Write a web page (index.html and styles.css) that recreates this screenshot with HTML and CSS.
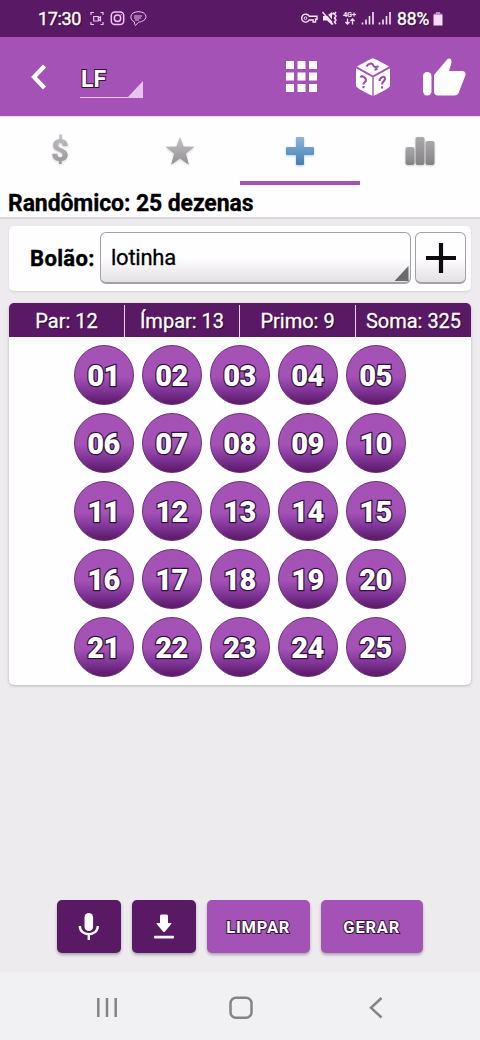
FILE: index.html
```html
<!DOCTYPE html>
<html lang="pt-BR">
<head>
<meta charset="utf-8">
<title>Randômico</title>
<link rel="stylesheet" href="styles.css">
</head>
<body>
<div class="statusbar">
  <span class="clock">17:30</span>
  <svg class="status-left" width="60" height="20" viewBox="0 0 60 20" fill="none" stroke="#ecc4f2" stroke-width="1.2">
    <path d="M4 3.500H1V6M10.500 3.500H13V6M1 13v2.500h3M13 13v2.500h-2.500M3.700 7.500h4.600v4.500H3.700zM8.500 9l2-1.200v4L8.500 10.600"/>
    <g stroke-width="1.500"><rect x="21.300" y="3" width="12.400" height="12.400" rx="3.500"/><circle cx="27.500" cy="9.200" r="3.200"/><path d="M30.800 5.700h.8"/></g>
    <path stroke-width="1" d="M44.500 13c-5.500-2.500-5-10 3.500-10.300h1c8.500.3 9 8 2.500 9.800-1.300.5-3 .8-3.500 1.200l-2.500 2.800c-.8-.8-1.200-2-1-3.500zM44 7h8M44 9h7M45 11h4"/>
  </svg>
  <svg class="status-right" width="92" height="20" viewBox="0 0 92 20" fill="none" stroke="#f7e4fa">
    <path stroke-width="1.400" d="M9.200 7.300H17v3h-1.400v2.700h-2.500V11H9.200A4 4 0 1 1 9.200 7.300z"/><circle cx="5.500" cy="9.200" r="1.300"/>
    <path fill="#f7e4fa" stroke="none" d="M23 7h3.500L32 3v13l-5-4.500h-4z"/>
    <path stroke="#591965" stroke-width="1.200" d="M24 2l12 14"/><path stroke-width="1.300" d="M22.500 3l10.500 12.500"/>
    <path stroke-width="1.500" d="M33.700 3.500l-1.200 2M36 3l-1.500 2 1.500 2-1.500 2 1.500 2-1.500 2 1.500 2"/>
    <text class="network" x="43" y="8">4G+</text>
    <path stroke-width="1.300" d="M47.500 9.500v5.500M45.500 13l2 2 2-2M52.500 15.500V10M50.500 12l2-2 2 2"/>
    <path stroke-width="1.600" d="M62.500 13.500v2M66 10.500v5M69.500 7v8.500M73 3v12.500M79.500 13.500v2M83 10.500v5M86.500 7v8.500M90 3v12.500"/>
  </svg>
  <span class="percent">88%</span>
  <svg class="battery" width="10" height="16" viewBox="0 0 10 16"><path fill="#bd91c5" d="M3 1h4v1.500h1.500Q9.500 2.500 9.500 4H.5Q.5 2.500 1.500 2.500H3z"/><path fill="#f5dcf8" d="M.5 4h9v10.500h-9z"/></svg>
</div>
<header class="appbar">
  <svg class="back" width="18" height="28" viewBox="0 0 18 28"><path d="M15.500 3L5 14l10.500 11" fill="none" stroke="#fff" stroke-width="4.200"/></svg>
  <div class="lottery"><span class="outlined">LF</span><svg width="15" height="16" viewBox="0 0 15 16"><path d="M0 16L15 0v16z" fill="#e7c4ed"/></svg></div>
  <svg class="apps" width="32" height="32" viewBox="0 0 32 32" fill="#fff"><path d="M0 0h8v8H0zM11.500 0h8v8h-8zM23 0h8v8h-8zM0 11.500h8v8H0zM11.500 11.500h8v8h-8zM23 11.500h8v8h-8zM0 23h8v8H0zM11.500 23h8v8h-8zM23 23h8v8h-8z"/></svg>
  <svg class="dice" width="36" height="40" viewBox="0 0 36 40">
    <path fill="#fff" d="M18 1.200Q19 1 34 9.500L18 18.500 2 9.500Q17 1 18 1.200zM1 11.200l16.300 9V38.800Q1 31 1 29zM35 11.200l-16.300 9V38.800Q35 31 35 29z"/>
    <g fill="none" stroke="#9a48aa" stroke-width="2"><path d="M11.500 9.500C13 6.500 17 5.500 18 8c.8 2.200 3 2.800 5.500 1.200M19.500 12.800l3-1"/><path d="M5.500 20.500c.5-3 5.500-.5 5.500 2.800 0 2.200-2.500 1.500-2.500 4.200M8.500 29v2.200"/><path d="M24.500 24c0-3.500 5.500-6 5.500-2.500 0 3-3 3-3 6M27 29.200v2.200"/></g>
  </svg>
  <svg class="like" width="44" height="40" viewBox="0 0 44 40" fill="#fff"><rect x="0" y="15" width="8.500" height="23.500" rx="4.200"/><path d="M11 18L24.500 2Q28.500 0 28.500 5.500L26 14h13Q43 14 42.500 18L36 35Q35 38.500 31 38.500H15Q11 38.500 11 34.500z"/></svg>
</header>
<nav class="tabs">
  <svg width="0" height="0" class="defs"><defs>
    <linearGradient id="gray" x2="0" y2="1"><stop stop-color="#c4c2c4"/><stop offset="1" stop-color="#929092"/></linearGradient>
    <linearGradient id="dark" x2="0" y2="1"><stop stop-color="#aaa8aa"/><stop offset="1" stop-color="#858285"/></linearGradient>
    <linearGradient id="blue" x2="0" y2="1"><stop stop-color="#8bb5dc"/><stop offset="1" stop-color="#447eaf"/></linearGradient>
  </defs></svg>
  <div class="tab"><svg width="36" height="40" viewBox="0 0 36 40"><text class="dollar" x="18" y="28" text-anchor="middle" fill="url(#gray)">$</text></svg></div>
  <div class="tab"><svg width="36" height="36" viewBox="0 0 36 36"><path fill="url(#gray)" d="M18 4l3.600 9.500 10.900.2-8.600 6.800 3 11.300-8.900-6.300-8.900 6.300 3-11.300L3.500 13.700l10.900-.2z"/></svg></div>
  <div class="tab active"><svg width="36" height="36" viewBox="0 0 36 36"><path fill="url(#blue)" d="M15 4h6q1 0 1 1v9h9q1 0 1 1v6q0 1-1 1h-9v9q0 1-1 1h-6q-1 0-1-1v-9H5q-1 0-1-1v-6q0-1 1-1h9V5q0-1 1-1z"/></svg></div>
  <div class="tab"><svg width="36" height="36" viewBox="0 0 36 36" fill="url(#dark)"><rect x="3.500" y="14" width="9" height="18" rx="2"/><rect x="13.500" y="4" width="9" height="28" rx="2"/><rect x="23.500" y="8" width="9" height="24" rx="2"/></svg></div>
</nav>
<h1 class="title"><span>Randômico: 25 dezenas</span></h1>
<main class="content">
  <section class="pool">
    <span class="pool-label">Bolão:</span>
    <div class="select"><span>lotinha</span><svg width="15" height="15" viewBox="0 0 15 15"><path d="M.5 15L14.500 0v15z" fill="#6d6a6d"/></svg></div>
    <div class="add"><svg width="30" height="30" viewBox="0 0 30 30"><path d="M15 0v30M0 15h30" stroke="#0d0b0d" stroke-width="4.200"/></svg></div>
  </section>
  <section class="board">
    <div class="stats"><div><span>Par: 12</span></div><div><span>Ímpar: 13</span></div><div><span>Primo: 9</span></div><div><span>Soma: 325</span></div></div>
    <div class="balls">
      <b>01</b><b>02</b><b>03</b><b>04</b><b>05</b>
      <b>06</b><b>07</b><b>08</b><b>09</b><b>10</b>
      <b>11</b><b>12</b><b>13</b><b>14</b><b>15</b>
      <b>16</b><b>17</b><b>18</b><b>19</b><b>20</b>
      <b>21</b><b>22</b><b>23</b><b>24</b><b>25</b>
    </div>
  </section>
</main>
<div class="actions">
  <div class="btn icon"><svg width="22" height="30" viewBox="0 0 22 30"><rect x="6.500" y="1" width="8.600" height="18" rx="4.300" fill="#fff"/><path d="M1.800 14c0 11 18 11 18 0M10.800 22v6" fill="none" stroke="#fff" stroke-width="2.400"/></svg></div>
  <div class="btn icon"><svg width="22" height="30" viewBox="0 0 22 30" fill="#fff"><path d="M7 4q0-1.500 1.500-1.500h5Q15 2.500 15 4v7h3q1 0 .3 1l-6.500 7.800q-.8.8-1.600 0L3.700 12q-.6-1 .4-1H7zM2 23.800h18q1 0 1 1.400T20 26.600H2q-1 0-1-1.400T2 23.800z"/></svg></div>
  <div class="btn"><span class="outlined">LIMPAR</span></div>
  <div class="btn"><span class="outlined">GERAR</span></div>
</div>
<footer class="navbar">
  <svg width="22" height="24" viewBox="0 0 22 24"><path d="M2.300 2v19M11 2v19M19.700 2v19"/></svg>
  <svg class="home" width="26" height="24" viewBox="0 0 26 24"><rect x="2.500" y="1.800" width="21" height="20" rx="5.500"/></svg>
  <svg width="16" height="24" viewBox="0 0 16 24"><path d="M13.500 2L3 11.800l10.500 9.700"/></svg>
</footer>
</body>
</html>
```
FILE: styles.css
```css
* { box-sizing: border-box; }
body {
  margin: 0;
  width: 480px;
  height: 1040px;
  display: flex;
  flex-direction: column;
  background: #edebee;
  font-family: Roboto, "Liberation Sans", sans-serif;
  color: #000;
  overflow: hidden;
}
svg { display: block; flex: none; }
.statusbar {
  height: 37px;
  flex: none;
  display: flex;
  align-items: center;
  padding-left: 38px;
  background: #591965;
  color: #fff;
}
.clock { width: 52px; font-size: 18px; letter-spacing: -.35px; -webkit-text-stroke: .4px #fff; text-shadow: 1px 1px 1px #250a2a; }
.status-right { margin-left: 150px; }
.network { font: bold 7.500px Roboto, sans-serif; fill: #f7e4fa; stroke: none; letter-spacing: -.2px; }
.percent { width: 37px; margin-left: 5px; font-size: 17.500px; letter-spacing: -.1px; -webkit-text-stroke: .4px #fff; text-shadow: 1px 1px 1px #250a2a; }
.battery { margin-left: -1px; }
.appbar {
  height: 79px;
  flex: none;
  display: flex;
  align-items: center;
  padding-left: 29px;
  background: #a552b7;
}
.outlined { color: #fff; -webkit-text-stroke: 2px #35143b; paint-order: stroke fill; }
.lottery {
  display: flex;
  align-items: flex-end;
  justify-content: space-between;
  width: 63px;
  height: 37px;
  margin: 6px 0 0 33px;
  border-bottom: 1px solid #e7c4ed;
  font-size: 23px;
  font-weight: bold;
}
.lottery span { padding-left: 1px; line-height: 35px; }
.apps { margin-left: 143px; }
.dice { margin-left: 37px; }
.like { margin-left: 32px; }
.tabs {
  height: 69px;
  flex: none;
  display: grid;
  grid-template-columns: repeat(4, 1fr);
  background: #fefdff;
  border-top: 1px solid #f0daf4;
}
.defs { position: absolute; }
.tab { display: flex; justify-content: center; padding-top: 16px; border-bottom: 4px solid transparent; }
.tab.active { border-color: #a552b7; }
.tab svg { overflow: visible; filter: drop-shadow(0 1px 1px #d2cfd3); }
.tab.active svg { filter: drop-shadow(0 1px 1px #a8cff0); }
.dollar { font: 900 31px Roboto, sans-serif; }
.title {
  height: 34px;
  flex: none;
  margin: 0;
  padding-left: 8px;
  background: #fefdff;
  border-bottom: 2px solid #d9d7da;
  font-size: 23px;
  letter-spacing: -.1px;
  line-height: 38px;
  white-space: nowrap;
  -webkit-text-stroke: .3px #000;
}
.content { padding: 7px 9px 0; flex: 1; }
.pool {
  height: 65px;
  display: flex;
  align-items: center;
  padding: 0 5px 1px 21px;
  background: #fefdff;
  border-radius: 5px;
  box-shadow: 0 1px 2px #d3d0d4;
}
.pool-label { width: 70px; font-size: 22px; font-weight: bold; letter-spacing: .35px; white-space: nowrap; -webkit-text-stroke: .4px #000; }
.select, .add {
  height: 52px;
  border: 1px solid #a4a0a5;
  border-bottom-width: 2px;
  border-radius: 6px;
  background: linear-gradient(#fefdff 50%, #e4e1e5);
}
.select {
  width: 311px;
  display: flex;
  align-items: flex-end;
  justify-content: space-between;
  padding: 0 1px 1px 10px;
  font-size: 22px;
  letter-spacing: -.25px;
  -webkit-text-stroke: .3px #000;
}
.select span { line-height: 47px; }
.add { width: 51px; margin-left: 4px; display: grid; place-items: center; }
.board {
  height: 382px;
  margin-top: 12px;
  border-radius: 5px;
  background: #fefdff;
  box-shadow: 0 1px 3px #b9b6bb;
  overflow: hidden;
}
.stats {
  display: grid;
  grid-template-columns: 115px 115px 116px 1fr;
  height: 34px;
  padding: 2px 0 3px;
  background: #591965;
  color: #fff;
  font-size: 20px;
  line-height: 32px;
  text-align: center;
  white-space: nowrap;
  text-shadow: 1px 1px 1px #200725;
  -webkit-text-stroke: .3px #fff;
}
.stats div + div { border-left: 1px solid #e9d4ed; }
.balls {
  display: grid;
  grid-template-columns: repeat(5, 60px);
  gap: 8px;
  justify-content: center;
  padding: 8px 1px 0 0;
}
.balls b {
  height: 60px;
  border: 1px solid #67306f;
  border-radius: 50%;
  background: linear-gradient(#a552b7 52%, #83379a 75%, #5a1967);
  color: #fff;
  font-size: 29px;
  font-weight: 900;
  letter-spacing: -.6px;
  line-height: 61px;
  text-align: center;
  -webkit-text-stroke: 2.500px #30143a;
  paint-order: stroke fill;
}
.actions { display: flex; gap: 11px; flex: none; height: 72px; padding-left: 57px; }
.btn {
  width: 102.500px;
  height: 53px;
  display: grid;
  place-items: center;
  border-radius: 5px;
  background: #a552b7;
  box-shadow: 0 2px 3px #aaa7ac;
  font-size: 16.500px;
  font-weight: bold;
  letter-spacing: .8px;
}
.btn .outlined { padding-top: 1px; }
.btn.icon { width: 64px; background: #591965; }
.navbar {
  height: 68px;
  flex: none;
  display: flex;
  justify-content: space-between;
  padding: 24px 96px 0;
  background: #f1f0f2;
}
.navbar svg { fill: none; stroke: #858386; stroke-width: 2.500; }
.navbar .home { margin-right: 4px; }
```
